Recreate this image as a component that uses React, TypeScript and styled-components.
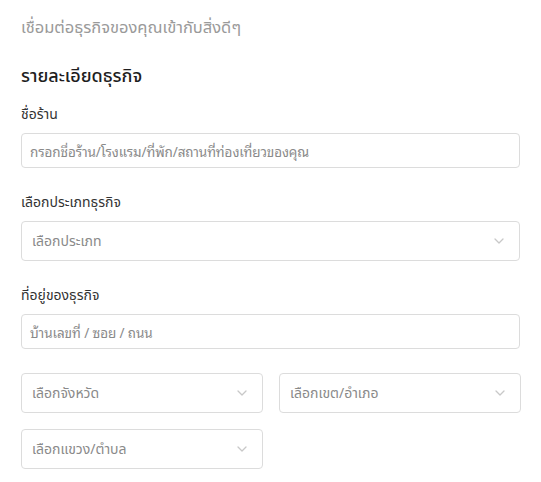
import React from "react";
import styled, { createGlobalStyle } from "styled-components";

const Global = createGlobalStyle`
  html, body { margin: 0; padding: 0; background: #fff; }
  body { font-family: "Noto Sans Thai", "Noto Sans", "Open Sans", sans-serif; }
  * { box-sizing: border-box; }
`;

const Page = styled.div`
  width: 541px;
  padding: 17px 21px 0 21px;
  display: flex;
  flex-direction: column;
`;

const Subtitle = styled.div`
  font-size: 16.5px;
  color: #9a9a9a;
  line-height: 22px;
`;

const Heading = styled.h2`
  margin: 25px 0 0 0;
  font-size: 18px;
  font-weight: 500;
  color: #1e1e1e;
  line-height: 26px;
`;

const Field = styled.div<{ $mt: number }>`
  display: flex;
  flex-direction: column;
  margin-top: ${(p) => p.$mt}px;
`;

const Label = styled.label`
  font-size: 14px;
  color: #333;
  line-height: 20px;
  margin-bottom: 8px;
`;

const TextBox = styled.div`
  height: 35px;
  border: 1px solid #dcdcdc;
  border-radius: 4px;
  display: flex;
  align-items: center;
  padding: 0 8px;
  font-size: 13.5px;
  letter-spacing: -0.1px;
  color: #8a8a8a;
  font-family: "Noto Sans Thai Looped", "Loma", "Garuda", "Tlwg Typo", "Noto Serif Thai", "Noto Sans Thai", sans-serif;
`;

const SelectBox = styled.div`
  height: 40px;
  border: 1px solid #dcdcdc;
  border-radius: 4px;
  display: flex;
  align-items: center;
  justify-content: space-between;
  padding: 0 15px 0 10px;
  font-size: 14px;
  color: #8a8a8a;
`;

const Grid = styled.div`
  display: grid;
  grid-template-columns: 242px 242px;
  column-gap: 16px;
  row-gap: 16px;
  margin-top: 24px;
`;

const Chevron = () => (
  <svg width="10" height="6" viewBox="0 0 10 6" fill="none">
    <path d="M1 1 L5 5 L9 1" stroke="#c8c8c8" strokeWidth="1.3" strokeLinecap="round" strokeLinejoin="round" />
  </svg>
);

const Select = ({ text }: { text: string }) => (
  <SelectBox>
    <span>{text}</span>
    <Chevron />
  </SelectBox>
);

export default function App() {
  return (
    <>
      <Global />
      <Page>
        <Subtitle>เชื่อมต่อธุรกิจของคุณเข้ากับสิ่งดีๆ</Subtitle>
        <Heading>รายละเอียดธุรกิจ</Heading>
        <Field $mt={15}>
          <Label>ชื่อร้าน</Label>
          <TextBox>กรอกชื่อร้าน/โรงแรม/ที่พัก/สถานที่ท่องเที่ยวของคุณ</TextBox>
        </Field>
        <Field $mt={25}>
          <Label>เลือกประเภทธุรกิจ</Label>
          <Select text="เลือกประเภท" />
        </Field>
        <Field $mt={25}>
          <Label>ที่อยู่ของธุรกิจ</Label>
          <TextBox>บ้านเลขที่ / ซอย / ถนน</TextBox>
        </Field>
        <Grid>
          <Select text="เลือกจังหวัด" />
          <Select text="เลือกเขต/อำเภอ" />
          <Select text="เลือกแขวง/ตำบล" />
        </Grid>
      </Page>
    </>
  );
}
